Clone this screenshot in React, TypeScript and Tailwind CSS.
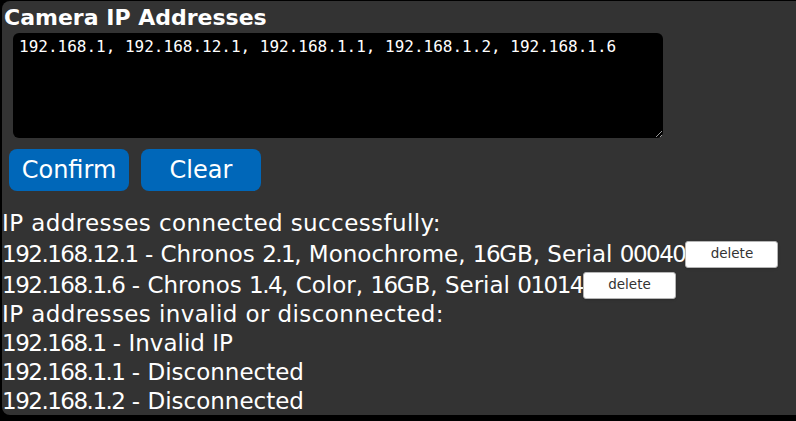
import React from "react";

// liste des caméras connectées
const connected = [
  { ip: "192.168.12.1", info: "Chronos 2.1, Monochrome, 16GB, Serial 00040" },
  { ip: "192.168.1.6", info: "Chronos 1.4, Color, 16GB, Serial 01014" },
];

const failed = [
  { ip: "192.168.1", status: "Invalid IP" },
  { ip: "192.168.1.1", status: "Disconnected" },
  { ip: "192.168.1.2", status: "Disconnected" },
];

// les chiffres sont resserrés un peu (police plus large que l'originale)
function Txt({ text }: { text: string }) {
  const parts = text.split(/([\d.]+)/);
  return (
    <>
      {parts.map((p, i) =>
        /\d/.test(p) ? (
          <span key={i} className="tracking-[-1.5px]">
            {p}
          </span>
        ) : (
          <span key={i}>{p}</span>
        )
      )}
    </>
  );
}

export default function App() {
  return (
    <div className="w-[796px] h-[421px] overflow-hidden bg-black">
      <div className="ml-[2px] mt-[1px] h-[414px] w-[830px] overflow-hidden rounded-lg bg-[#333333] text-white font-['DejaVu_Sans',sans-serif]">
        <h1 className="pl-[2px] pt-[4px] text-[22px] leading-[26px] font-bold">Camera IP Addresses</h1>

        <textarea
          className="ml-[11px] mt-[2px] block h-[105px] w-[650px] rounded-md bg-black px-[6px] pt-[3px] text-[16px] leading-[22px] text-white outline-none font-['DejaVu_Sans_Mono',monospace]"
          defaultValue="192.168.1, 192.168.12.1, 192.168.1.1, 192.168.1.2, 192.168.1.6"
        />

        <div className="mt-[11px] ml-[7px] flex gap-[12px]">
          <button className="h-[42px] w-[120px] rounded-lg bg-[#0067b9] text-[24px] text-white">Confirm</button>
          <button className="h-[42px] w-[120px] rounded-lg bg-[#0067b9] text-[24px] text-white">Clear</button>
        </div>

        <div className="mt-[18px] text-[23px] leading-[29px] whitespace-nowrap">
          <div className="h-[29px] tracking-[0.4px]">IP addresses connected successfully:</div>
          {connected.map((c, i) => (
            <div key={c.ip} className={i === 0 ? "flex h-[32px] items-center" : "flex h-[30px] items-center"}>
              <span>
                <Txt text={`${c.ip} - ${c.info}`} />
              </span>
              <button className="h-[27px] w-[93px] shrink-0 rounded-[3px] border border-[#b5b5b5] bg-white text-[13.5px] leading-none text-[#333333] shadow-sm">
                delete
              </button>
            </div>
          ))}
          <div className="h-[29px] tracking-[0.4px]">IP addresses invalid or disconnected:</div>
          {failed.map((f) => (
            <div key={f.ip} className="h-[29px]">
              <Txt text={`${f.ip} - ${f.status}`} />
            </div>
          ))}
        </div>
      </div>
    </div>
  );
}
